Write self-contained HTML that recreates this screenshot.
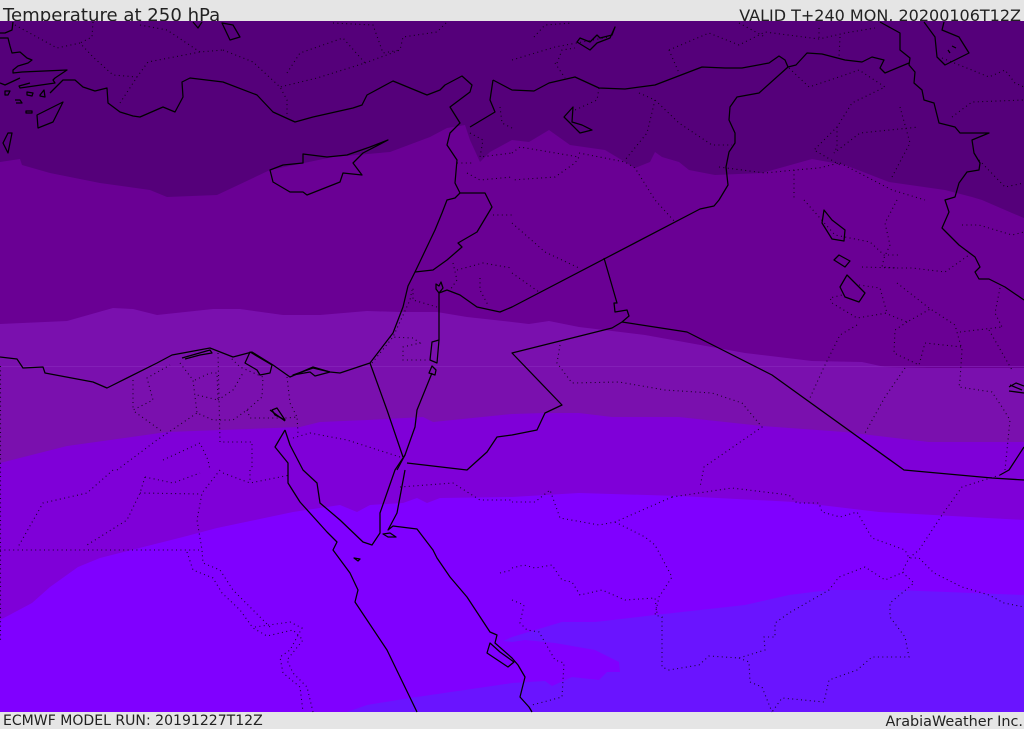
<!DOCTYPE html>
<html><head><meta charset="utf-8"><style>
html,body{margin:0;padding:0;background:#e5e5e5;width:1024px;height:729px;overflow:hidden}
svg{display:block}
text{font-family:"DejaVu Sans",sans-serif;fill:#222}
.c{fill:none;stroke:#000;stroke-width:1.25;stroke-linejoin:round}
.d{fill:none;stroke:#000;stroke-width:1.1;stroke-dasharray:1 3.4;opacity:.8}
</style></head><body>
<svg width="1024" height="729" viewBox="0 0 1024 729">
<rect width="1024" height="729" fill="#e5e5e5"/>
<text x="3" y="21" font-size="18.1">Temperature at 250 hPa</text>
<text x="1021" y="21" font-size="16" text-anchor="end">VALID T+240 MON, 20200106T12Z</text>
<text x="3" y="725" font-size="14.05">ECMWF MODEL RUN: 20191227T12Z</text>
<text x="1023" y="726" font-size="14.4" text-anchor="end">ArabiaWeather Inc.</text>
<rect x="0" y="21" width="1024" height="691" fill="#8000ff"/>
<path fill="#7f00d8" d="M0,21H1024V520L879,512L795,502L679,496L579,493L512,497L440,498L427,503L417,498L403,503L370,505L357,512L340,505L293,512L217,528L183,537L100,558L78,567L50,587L32,603L0,620Z"/>
<path fill="#7a10ae" d="M0,21H1024V442L929,442L845,432L762,426L679,417L612,417L579,413L545,413L512,414L433,422L423,417L367,420L320,422L300,427L167,432L67,446L0,463Z"/>
<path fill="#6a0094" d="M0,21H1024V368L929,368L885,367L862,362L812,361L745,353L645,335L579,327L549,321L529,324L512,322L467,317L437,312L400,312L367,311L320,315L283,315L240,309L213,309L157,315L133,309L113,308L67,321L0,324Z"/>
<path fill="#55007a" d="M0,21H1024V218L1012,213L982,200L972,197L945,190L889,182L845,165L812,159L762,173L715,175L689,170L679,162L662,157L655,152L650,162L635,168L605,150L570,145L549,130L529,142L512,140L490,152L480,162L470,140L465,125L447,128L430,137L390,152L333,157L270,170L217,195L167,197L150,190L100,183L50,173L22,165L20,159L0,162Z"/>
<path fill="#6a14ff" d="M503,641L512,637L562,622L595,622L655,615L745,605L789,595L829,590L895,590L1024,595V712H347L367,705L410,698L512,683L545,681L552,686L572,677L599,680L607,672L620,672L619,662L595,650L555,643L525,640L512,642Z"/>
<path stroke="#8a2cc0" stroke-width="1" opacity=".55" fill="none" d="M0,366.5H1024"/>
<g class="d">
<path d="M15,25L57,48L80,43L93,57L113,75L137,77M93,22L92,37L80,43M140,25L167,30L200,52L223,50M120,103L137,77L148,62L200,52M223,50L253,62L280,87L287,100L287,117M287,73L300,53L343,38L365,63L317,78L280,87M365,63L400,50L403,37L437,32L447,22M333,23L373,25L383,53L400,50"/>
<path d="M512,60L555,47L609,37M534,37L545,25L572,23M555,63L565,78M557,63L562,50L575,48M599,88L597,100L575,110M639,93L655,100L679,123L712,145L732,145M655,100L647,133L625,160M669,50L679,73M669,50L709,33L739,45L765,32L819,39L845,33L875,28M739,23L765,37M819,28V39M840,37L839,57M789,68L809,87L839,77L859,70L885,87L852,103L837,127L814,150L840,165M837,127L837,147L834,153L860,133L919,127M900,107L910,143L892,177M952,117L972,102L1024,100M942,58L989,77L1005,70L1015,83L1024,87M979,160L1005,187L1024,183"/>
<path d="M512,153L520,147L579,157L575,163L555,177L512,180M579,153L625,162L635,168L655,200L675,222M719,167L765,173L795,170L819,168L839,163M794,170V200M840,163L892,190L925,200"/>
<path d="M512,223L545,252L579,268M512,273L539,292M804,200L835,235L870,242L884,255L899,255M897,200L885,223L890,245L884,258L882,267L897,268M862,267L897,268L912,268L945,272L969,255M897,283L929,308L955,325L962,350L960,380L959,387L992,392L1002,407L1010,420L1005,470M859,285L880,288L887,313L857,318L832,303L830,298L842,295M857,325L840,335L824,367L809,400M885,313L907,322L932,308M907,322L895,330L894,353L919,365L925,343L962,347M905,368L885,397L865,433M960,332L1002,327M989,330L1012,370M1000,288L995,313L1002,327M962,225L979,225L1012,235L1024,232"/>
<path d="M560,345L557,363L572,383L619,382L665,390L712,393L742,403L762,427L704,467L700,487M672,497L615,522L599,525L560,518L550,490L535,502L512,502M672,497L732,488L789,495L797,503L819,503L822,512L840,517L857,512L872,538L905,550L909,558L919,558L934,573L962,587L989,595L1004,603L1024,607"/>
<path d="M1000,475L962,487L942,515L919,550L909,558L902,572L914,583L890,603L890,617L905,637L909,657L872,657L857,670L829,680L824,702L782,698L772,712M615,522L645,537L655,545L672,577L659,597L655,615L662,617L662,667L669,670L699,665L709,656L739,658L765,650L764,637L775,637L775,623L789,613L829,590L839,577L865,567L885,580L904,572M739,658L749,662L750,682L762,687L772,712M512,568L524,565L535,568L552,565L562,580L572,582L580,595L602,590L625,600L655,598L657,613M512,600L524,605L520,623L527,630L539,632L555,660L564,663L562,697L532,705"/>
<path d="M117,470L157,440L197,413M133,380L133,410L153,400L147,378L170,365M135,412L163,432M180,363L193,380L197,413L213,420L233,420L247,410L262,397L263,377L240,367L230,357M195,380L210,373L217,373L218,400L197,395M218,400L233,390L243,373M218,353L220,442L252,442L252,470M247,410L250,418L287,418L297,417L298,433M287,377L290,403L297,417M293,438L310,433L347,440L400,457M163,460L200,443L208,460L210,470"/>
<path d="M390,337L413,338L420,343L403,347L403,360L427,360M372,363L393,337L410,300L412,290M437,307L413,300L413,288M453,263L457,280L450,290M457,270L483,263L512,268M480,278L480,290L488,305M493,215H512M500,107L502,123L512,128M470,133L483,140L480,157L512,153M467,173L480,180L512,177M457,163H473"/>
<path d="M113,470L87,493L43,503L18,547M145,477L173,483L200,473M145,477L140,493L127,520L87,545M140,493L200,494M220,470L202,493L197,520L202,550L203,563L220,570L233,590L260,617L270,627M223,473L250,483L290,475M250,470V483M0,550H200M187,552L193,570L213,578L222,593L240,610L253,628L267,636L293,630L303,640L287,660L293,673L307,687L313,712M255,627L290,622L302,628L290,650L280,657L283,673L300,687L303,712M400,487L453,483L480,500L512,500M500,573L512,570M0.5,366V640"/>
</g>
<g class="c">
<path d="M13,22L12,30L5,33L0,33M0,38L8,38L10,46L12,53L20,52L27,58L32,60L28,63L18,66L13,70L13,73L22,72L67,70L55,78L53,80L55,83L20,88L19,86L30,83"/>
<path d="M50,93L63,80L75,80L83,87L95,91L107,88L108,103L120,112L133,116L140,117L163,107L175,112L183,97L182,82L190,78L223,82L257,95L273,112L295,122L313,117L353,108L362,105L367,95L393,81L427,95L440,90L445,85L462,76L472,85L470,92L450,107L460,123L450,133L447,145L457,160L455,183L460,193L485,193L492,207L477,232L458,243L462,247L447,260L433,270L415,272M460,193L455,198L447,200L442,213L435,230L415,272L408,286L403,307L393,333L370,363L340,373L330,372L313,367L290,377L273,365L252,352L233,357L210,348L172,355L157,363L107,388L93,382L45,373L43,367L23,368L17,359L0,357"/>
<path d="M182,358L210,350L212,353L200,355L185,359M245,363L250,352L272,365L270,373L260,375L257,370ZM293,375L313,368L330,372L315,376L310,372ZM272,410L277,408L285,420L275,415Z"/>
<path d="M493,80L490,100L495,112L470,127M493,80L512,90L534,91L549,83L575,77L599,88L625,89L655,85L702,67L725,68L742,68L769,63L779,56L785,60L788,67L796,65L807,53L822,54L845,60L862,62L872,57L884,60L880,68L885,73L909,63M880,22L900,33L900,50L910,58L909,65L915,72L914,83L922,90L924,100L934,103L939,123L955,127L960,133L989,133L972,140L974,153L980,163L979,170L967,172L959,183L955,197L945,200L949,212L942,228L959,245L975,257L980,267L975,272L979,279L989,279L1005,287L1024,300"/>
<path d="M788,67L759,93L737,97L730,107L729,120L735,133L735,143L729,152L726,167L728,185L719,200L714,206L700,209L512,307L500,312L477,307L460,295L447,290L439,293V340M604,258L617,303L614,303L615,312L627,310L629,316L622,322L612,328L512,353L562,405L545,413L537,430L512,435L497,437L487,452L467,470L407,463M622,322L687,332L772,375L904,470L992,478L1024,480M1000,475L1009,470L1024,447"/>
<path d="M439,286L436,284L436,289L439,293L443,288L441,282ZM432,342L439,340L437,363L430,360ZM432,366L436,370L435,375L429,373ZM432,373L417,410L415,427L405,455L397,470M370,363L387,410L403,457"/>
<path d="M285,430L275,447L288,463L288,483L300,502L327,532L337,542L333,550L350,573L358,590L355,602L387,650L417,712M285,430L290,445L303,470L317,483L320,503L340,520L363,542L372,545L380,533L380,513L395,470L405,455M405,470L397,513L388,530L393,526L417,529L433,550L437,558L450,577L467,597L490,632L497,635L495,643L512,658L518,665L525,677L520,697L529,707L532,712"/>
<path d="M490,643L487,653L508,667L514,662L500,652ZM383,534L390,533L396,537L388,537ZM354,558L360,559L358,561ZM270,410L285,421"/>
<path d="M303,154L303,163L283,165L270,170L273,182L290,192L303,192L307,195L340,182L343,173L362,175L353,163L363,153L388,140L370,147L347,155L327,157Z"/>
<path d="M63,102L37,115L38,128L53,122ZM8,133L3,143L8,153L12,133ZM20,78L5,85L0,83M27,92L33,93L32,96L27,95ZM15,100L20,100L22,103L16,103M40,95L44,90L45,97L40,96ZM26,111L32,111L32,113L26,113ZM5,91H10L8,95H5Z"/>
<path d="M193,22L198,28L202,22M222,23L230,40L240,37L233,25Z"/>
<path d="M615,27L612,35L600,38L597,35L590,42L580,38L577,42L590,50L597,43L610,38ZM573,107L564,117L580,133L592,130L582,125L572,122Z"/>
<path d="M924,22L935,37L937,57L945,65L969,53L959,37L942,30L944,22M948,50L950,53M952,46L956,48"/>
<path d="M824,210L822,223L832,239L844,241L845,230L832,220ZM839,255L834,260L845,267L850,261ZM847,275L840,287L845,297L859,302L865,293L852,280Z"/>
<path d="M1009,387L1016,383L1024,386M1009,391L1024,393M1010,385L1022,390"/>
</g>
</svg>
</body></html>
